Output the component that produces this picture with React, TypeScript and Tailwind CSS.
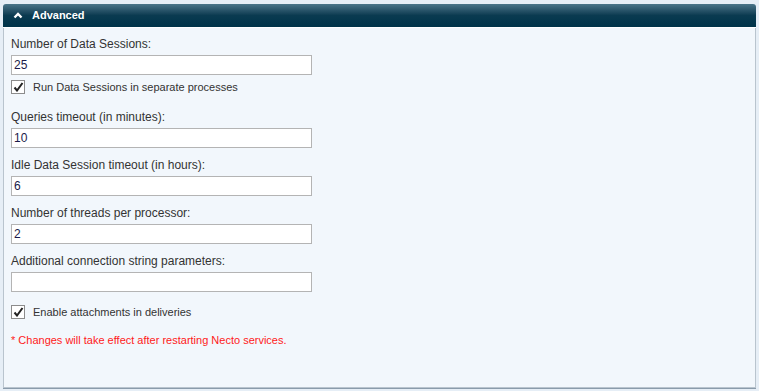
import React from 'react'

const Field = ({ label, value }: { label: string; value: string }) => (
  <div className="flex flex-col">
    <div className="h-[14px] leading-[14px]">{label}</div>
    <input
      readOnly
      value={value}
      className="mt-[4px] w-[301px] h-[20px] bg-white border border-[#b4b4b4] px-[2px] text-[12px] text-[#1a1a4a] outline-none"
    />
  </div>
)

const Check = ({ label }: { label: string }) => (
  <div className="flex items-center h-[14px] gap-[8px] leading-[14px] text-[11px]">
    <span className="w-[14px] h-[14px] border border-[#8c8c8c] bg-white flex items-center justify-center">
      <svg width="11" height="10" viewBox="0 0 11 10">
        <path d="M1.5 5.5 L4 8.5 L9.5 1" fill="none" stroke="#222" strokeWidth="2" />
      </svg>
    </span>
    <span>{label}</span>
  </div>
)

const App = () => {
  return (
    <div
      className="w-[759px] h-[391px] bg-[#e6eef6] pl-[3px] pr-[3px] pt-[4px] text-[12px] text-[#333]"
      style={{ fontFamily: '"Liberation Sans", Arial, sans-serif' }}
    >
      <div className="h-[23px] rounded-t-[3px] bg-gradient-to-b from-[#4a7589] via-[#0a3a50] to-[#003349] flex items-center text-white font-bold text-[11px]">
        <svg className="ml-[10px]" width="10" height="7" viewBox="0 0 10 7">
          <path d="M1.5 5.5 L5 2 L8.5 5.5" fill="none" stroke="#fff" strokeWidth="2.4" />
        </svg>
        <span className="ml-[9px]">Advanced</span>
      </div>
      <div className="h-[1px] bg-white" />
      <div className="h-[360px] bg-[#f2f7fc] border border-t-0 border-[#b9c4ce] pl-[7px] pt-[9px]">
        <Field label="Number of Data Sessions:" value="25" />
        <div className="mt-[5px]">
          <Check label="Run Data Sessions in separate processes" />
        </div>
        <div className="mt-[16px]">
          <Field label="Queries timeout (in minutes):" value="10" />
        </div>
        <div className="mt-[10px]">
          <Field label="Idle Data Session timeout (in hours):" value="6" />
        </div>
        <div className="mt-[10px]">
          <Field label="Number of threads per processor:" value="2" />
        </div>
        <div className="mt-[10px]">
          <Field label="Additional connection string parameters:" value="" />
        </div>
        <div className="mt-[13px]">
          <Check label="Enable attachments in deliveries" />
        </div>
        <div className="mt-[14px] h-[14px] leading-[14px] text-[11px] text-[#ff1a1a]">* Changes will take effect after restarting Necto services.</div>
      </div>
      <div className="h-[1px] bg-[#8a9bab]" />
    </div>
  )
}

export default App
